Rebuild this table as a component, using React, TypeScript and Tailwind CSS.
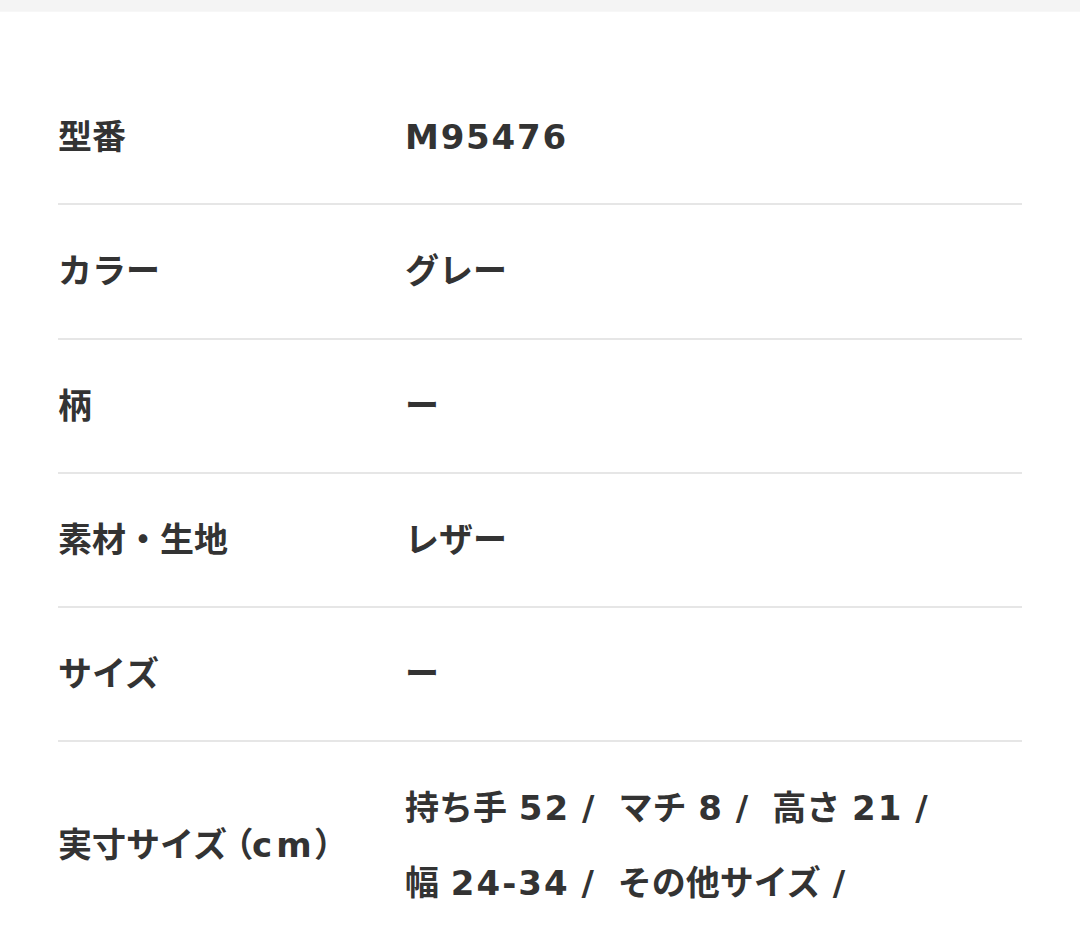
import React from "react";

type Row = { label: React.ReactNode; value: React.ReactNode };

const Num = ({ children }: { children: React.ReactNode }) => (
  <span className="tracking-[2px]">{children}</span>
);

const sizeItems: React.ReactNode[] = [
  <>持ち手 <Num>52</Num> /</>,
  <>マチ <Num>8</Num> /</>,
  <>高さ <Num>21</Num> /</>,
  <>幅 <Num>24-34</Num> /</>,
  <>その他サイズ /</>,
];

const rows: Row[] = [
  { label: "型番", value: <span className="tracking-[1.8px]">M95476</span> },
  { label: "カラー", value: "グレー" },
  { label: "柄", value: "ー" },
  { label: "素材・生地", value: "レザー" },
  { label: "サイズ", value: "ー" },
  {
    label: (
      <>
        実寸サイズ
        <span className="ml-[8px] [font-feature-settings:'palt']">（</span>
        <span className="tracking-[4px]">cm</span>
        <span className="[font-feature-settings:'palt']">）</span>
      </>
    ),
    value: (
      <div className="flex flex-wrap w-[570px]">
        {sizeItems.map((t, i) => (
          <span key={i} className="whitespace-nowrap mr-[24px]">
            {t}
          </span>
        ))}
      </div>
    ),
  },
];

export default function App() {
  return (
    <div className="w-[1080px] h-[932px] overflow-hidden bg-white text-[#333333] font-['DejaVu_Sans','Noto_Sans_CJK_JP',sans-serif] font-bold text-[34px]">
      <div className="h-[12px] bg-[#f4f4f4] border-b border-[#f7f7f7]" />
      <div className="px-[58px] pt-[59px]">
        {rows.map((r, i) => (
          <div
            key={i}
            className={
              "flex items-center py-[29px] leading-[74.25px] " +
              (i < rows.length - 1 ? "border-b-2 border-[#e6e6e6]" : "")
            }
          >
            <div className="w-[347px] shrink-0">{r.label}</div>
            <div className="flex-1">{r.value}</div>
          </div>
        ))}
      </div>
    </div>
  );
}
